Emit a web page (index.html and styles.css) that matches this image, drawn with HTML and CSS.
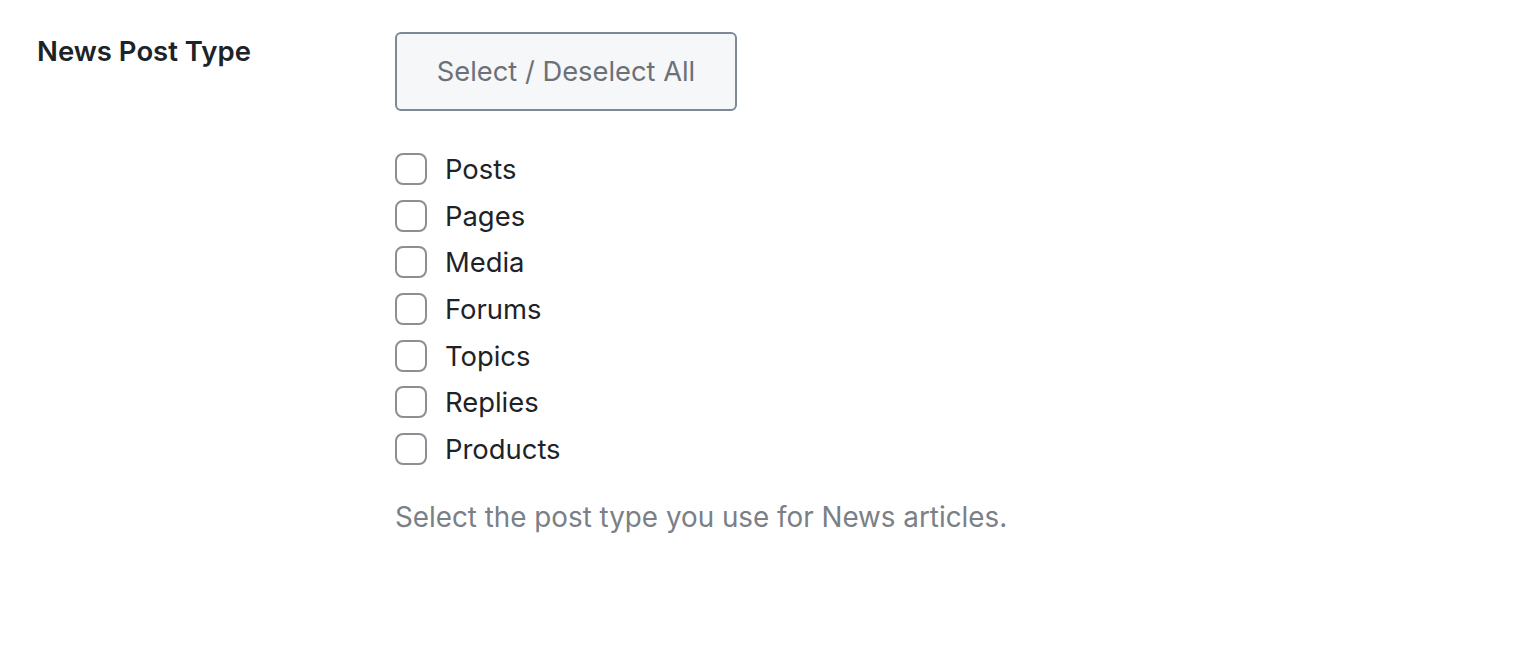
FILE: index.html
```html
<!DOCTYPE html>
<html lang="en">
<head>
    <meta charset="UTF-8">
    <meta name="viewport" content="width=device-width, initial-scale=1.0">
    <title>News Post Type</title>
    <link rel="stylesheet" href="styles.css">
</head>
<body>
    <div class="form-row">
        <div class="form-label">News Post Type</div>
        <div class="form-field">
            <button class="btn-toggle" type="button">Select / Deselect All</button>
            <ul class="check-list">
                <li><label><input type="checkbox"><span>Posts</span></label></li>
                <li><label><input type="checkbox"><span>Pages</span></label></li>
                <li><label><input type="checkbox"><span>Media</span></label></li>
                <li><label><input type="checkbox"><span>Forums</span></label></li>
                <li><label><input type="checkbox"><span>Topics</span></label></li>
                <li><label><input type="checkbox"><span>Replies</span></label></li>
                <li><label><input type="checkbox"><span>Products</span></label></li>
            </ul>
            <p class="description">Select the post type you use for News articles.</p>
        </div>
    </div>
</body>
</html>
```

FILE: styles.css
```css
*{
    margin: 0;
    padding: 0;
    box-sizing: border-box;
}
body{
    background: #fff;
    font-family: Inter, "Liberation Sans", sans-serif;
    color: #1d2327;
}
.form-row{
    display: grid;
    grid-template-columns: 358px 1fr;
    padding: 32px 0 0 37px;
}
.form-label{
    font-size: 27.5px;
    font-weight: 600;
    line-height: 38px;
    color: #1d2327;
}
.btn-toggle{
    width: 342px;
    height: 79px;
    border: 2px solid #7e8993;
    border-radius: 6px;
    background: #f6f7f9;
    color: #6c7178;
    font-family: inherit;
    font-size: 27.3px;
    cursor: pointer;
}
.check-list{
    list-style: none;
    margin-top: 42px;
}
.check-list li{
    height: 46.7px;
}
.check-list label{
    display: flex;
    align-items: center;
    gap: 18px;
    font-size: 27.4px;
    line-height: 32px;
}
.check-list input{
    appearance: none;
    width: 32px;
    height: 32px;
    border: 2px solid #8c8f94;
    border-radius: 8px;
    background: #fff;
}
.description{
    margin-top: 20px;
    font-size: 27.8px;
    line-height: 34px;
    color: #7b8087;
}
```
